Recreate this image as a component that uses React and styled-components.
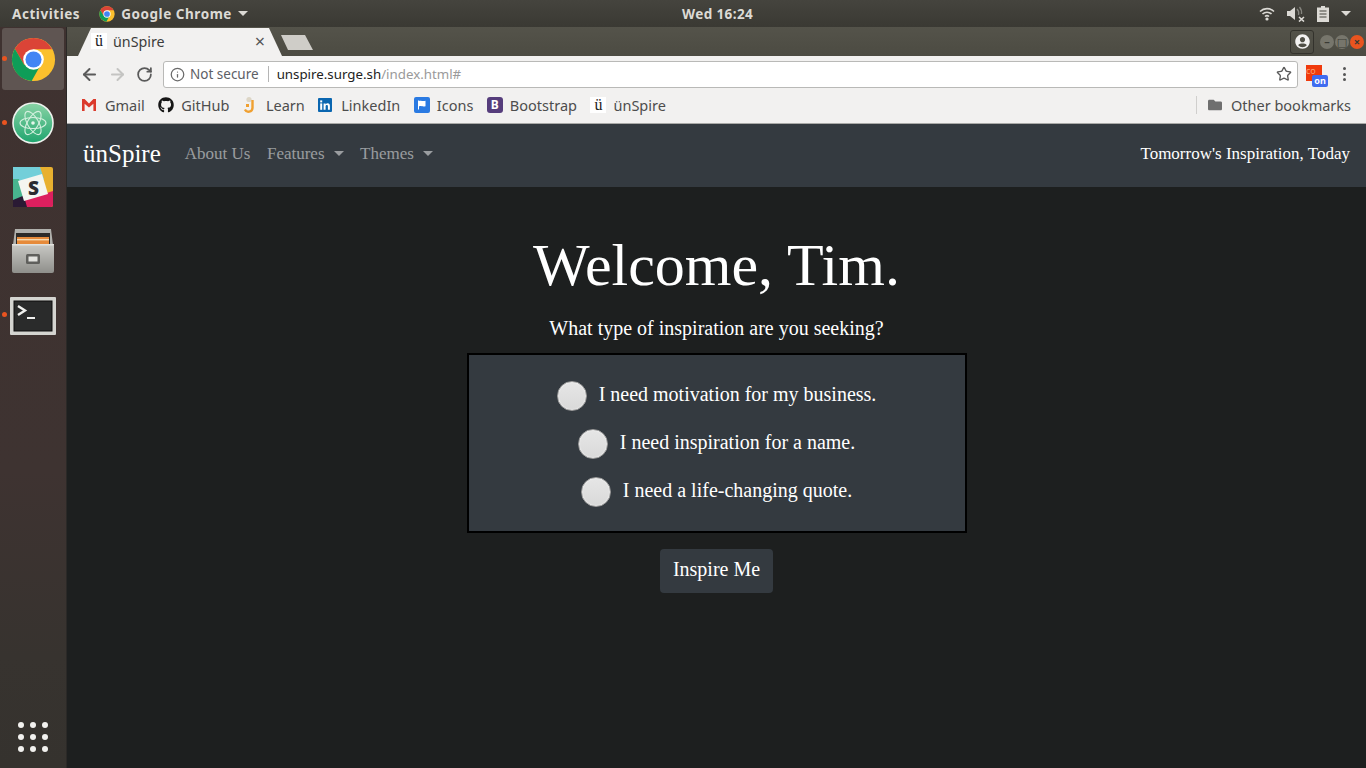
import React from "react";
import styled, { createGlobalStyle } from "styled-components";
import { ArrowLeft, ArrowRight, RotateCw, Star, Info } from "lucide-react";
import { FaGithub, FaFolder, FaUserCircle } from "react-icons/fa";

const UI_FONT = `"Noto Sans", "DejaVu Sans", sans-serif`;
const PAGE_FONT = `"Liberation Serif", "Times New Roman", serif`;

const GlobalStyle = createGlobalStyle`
  html, body {
    margin: 0;
    padding: 0;
    height: 768px;
    overflow: hidden;
    background: #1d1f1f;
  }
  * {
    box-sizing: border-box;
  }
`;

const ChromeLogo = ({ size }) => (
  <svg width={size} height={size} viewBox="0 0 48 48">
    <circle cx="24" cy="24" r="23" fill="#fbc02d" />
    <path d="M24 1a23 23 0 0 0-19.9 11.5L14 29.5 24 13h19.9A23 23 0 0 0 24 1z" fill="#db4437" />
    <path d="M4.1 12.5A23 23 0 0 0 22 46.9L31 31l-17-1.5z" fill="#0f9d58" />
    <circle cx="24" cy="24" r="11" fill="#fff" />
    <circle cx="24" cy="24" r="8.6" fill="#4285f4" />
  </svg>
);

const AtomLogo = () => (
  <svg width="42" height="42" viewBox="0 0 42 42">
    <defs>
      <linearGradient id="atomBg" x1="0" y1="0" x2="0" y2="1">
        <stop offset="0" stopColor="#8ad3a6" />
        <stop offset="1" stopColor="#1fa56e" />
      </linearGradient>
    </defs>
    <circle cx="21" cy="21" r="20" fill="url(#atomBg)" stroke="#eef2ee" strokeWidth="1.6" />
    <g fill="none" stroke="#d5f0df" strokeWidth="1.1">
      <ellipse cx="21" cy="21" rx="13" ry="5.5" />
      <ellipse cx="21" cy="21" rx="13" ry="5.5" transform="rotate(60 21 21)" />
      <ellipse cx="21" cy="21" rx="13" ry="5.5" transform="rotate(120 21 21)" />
    </g>
    <circle cx="21" cy="21" r="1.8" fill="#e6f7ec" />
  </svg>
);

const SlackLogo = () => (
  <svg width="40" height="40" viewBox="0 0 40 40">
    <rect width="40" height="40" rx="2" fill="#e8b02f" />
    <path d="M0 0h27L31 12 3 20 0 16z" fill="#73cfd9" />
    <path d="M0 12l6 0 6 18L0 36z" fill="#48b58f" />
    <path d="M0 40v-7l12-5 3 12z" fill="#2a1a34" />
    <path d="M14 40l-2-7 28-9v14a2 2 0 0 1-2 2z" fill="#dc1f5e" />
    <path d="M5 14L29 7l6 20-24 7z" fill="#f5f5f0" />
    <text x="20.5" y="27.5" textAnchor="middle" fontFamily="Noto Sans" fontWeight="900" fontSize="19" fill="#2b2b30">S</text>
  </svg>
);

const FilesLogo = () => (
  <svg width="42" height="44" viewBox="0 0 42 44">
    <defs>
      <linearGradient id="drawer" x1="0" y1="0" x2="0" y2="1">
        <stop offset="0" stopColor="#c9c9c5" />
        <stop offset="1" stopColor="#8f8f8b" />
      </linearGradient>
    </defs>
    <path d="M3 0h36l2 16H1z" fill="#b0b0ac" />
    <rect x="4" y="4" width="34" height="13" fill="#2c2a28" />
    <rect x="5" y="8" width="32" height="9" fill="#e68a3a" />
    <rect x="5" y="10" width="32" height="1.4" fill="#f5d9b0" />
    <rect x="0" y="15" width="42" height="29" rx="2" fill="url(#drawer)" />
    <rect x="0" y="15" width="42" height="1.5" fill="#e2e2de" />
    <rect x="14" y="25" width="14" height="10" rx="1.5" fill="#5f5f5c" />
    <rect x="16.5" y="27.5" width="9" height="5" fill="#e3e3df" />
  </svg>
);

const TerminalLogo = () => (
  <svg width="46" height="40" viewBox="0 0 46 40">
    <rect y="2" width="46" height="38" rx="1" fill="#d4d4d0" />
    <rect x="4" y="6" width="38" height="30" fill="#2a2b2b" stroke="#0c0c0c" />
    <path d="M8 11l7 4.5-7 4.5" fill="none" stroke="#f0f0ee" strokeWidth="2.4" />
    <rect x="17" y="22" width="8" height="2" fill="#f0f0ee" />
  </svg>
);

const DOCK_ITEMS = [
  { icon: <ChromeLogo size={45} />, running: true, active: true },
  { icon: <AtomLogo />, running: true },
  { icon: <SlackLogo />, running: false },
  { icon: <FilesLogo />, running: false },
  { icon: <TerminalLogo />, running: true },
];

const GmailIcon = () => (
  <svg width="14" height="12" viewBox="0 0 14 12">
    <rect width="14" height="12" fill="#f4f3f1" />
    <path d="M0 0h2.6L7 4.6 11.4 0H14v12h-2.6V4.8L7 8.6 2.6 4.8V12H0z" fill="#db3a2c" />
  </svg>
);

const LearnIcon = () => (
  <svg width="14" height="18" viewBox="0 0 14 18">
    <circle cx="6" cy="3.5" r="2.6" fill="#ddd6c6" />
    <path d="M9.5 4v8a4 4 0 0 1-7.6 1.5" fill="none" stroke="#f0a030" strokeWidth="2.4" />
    <path d="M3 8h3v3H3z" fill="#f0a030" />
  </svg>
);

const LinkedInIcon = () => (
  <svg width="14" height="14" viewBox="0 0 14 14">
    <rect width="14" height="14" rx="1" fill="#0a66b0" />
    <rect x="2.2" y="5.4" width="2" height="6.4" fill="#fff" />
    <rect x="2.2" y="2.4" width="2" height="2" fill="#fff" />
    <path d="M5.6 5.4h2v1c.5-.8 1.2-1.2 2.1-1.2 1.6 0 2.2 1 2.2 2.7v3.9h-2V8.2c0-.8-.3-1.2-.9-1.2-.8 0-1.4.5-1.4 1.4v3.4h-2z" fill="#fff" />
  </svg>
);

const IconsIcon = () => (
  <svg width="16" height="16" viewBox="0 0 16 16">
    <rect width="16" height="16" rx="2" fill="#2a7ae2" />
    <path d="M4 3.5h1v9H4zM5 4c2-1 3 .6 6.5-.2v5.4C8 10 7 8.4 5 9.4z" fill="#fff" />
  </svg>
);

const BootstrapIcon = styled.span`
  width: 16px;
  height: 16px;
  border-radius: 3px;
  background: #563d7c;
  color: #fff;
  font: 700 12px/16px ${UI_FONT};
  text-align: center;
`;

const LetterIcon = styled.span`
  width: 16px;
  height: 16px;
  background: #fff;
  color: #222;
  font: 400 16px/15px ${PAGE_FONT};
  text-align: center;
`;

const BOOKMARKS = [
  { label: "Gmail", icon: <GmailIcon /> },
  { label: "GitHub", icon: <FaGithub size={16} color="#161616" /> },
  { label: "Learn", icon: <LearnIcon /> },
  { label: "LinkedIn", icon: <LinkedInIcon /> },
  { label: "Icons", icon: <IconsIcon /> },
  { label: "Bootstrap", icon: <BootstrapIcon>B</BootstrapIcon> },
  { label: "ünSpire", icon: <LetterIcon>ü</LetterIcon> },
];

const CHOICES = [
  "I need motivation for my business.",
  "I need inspiration for a name.",
  "I need a life-changing quote.",
];

const App = () => {
  return (
    <Screen>
      <GlobalStyle />
      <TopBar>
        <TopLeft>
          <TopLabel>Activities</TopLabel>
          <AppMenu>
            <ChromeLogo size={16} />
            <TopLabel>Google Chrome</TopLabel>
            <TopCaret />
          </AppMenu>
        </TopLeft>
        <Clock>Wed 16:24</Clock>
        <TopRight>
          <svg width="16" height="14" viewBox="0 0 16 14">
            <g fill="none" stroke="#dcdad5" strokeWidth="1.6">
              <path d="M1 4.5a10 10 0 0 1 14 0" />
              <path d="M3.5 7a6.5 6.5 0 0 1 9 0" />
              <path d="M6 9.5a3 3 0 0 1 4 0" />
            </g>
            <circle cx="8" cy="12" r="1.6" fill="#dcdad5" />
          </svg>
          <svg width="18" height="16" viewBox="0 0 18 16">
            <path d="M0 5h3l5-4v13l-5-4H0z" fill="#dcdad5" />
            <path d="M10 3a6 6 0 0 1 1.5 6M12.5 1a9 9 0 0 1 2 7" fill="none" stroke="#85847e" strokeWidth="1.3" />
            <path d="M12 11l5 4.5M17 11l-5 4.5" stroke="#dcdad5" strokeWidth="1.6" />
          </svg>
          <svg width="12" height="16" viewBox="0 0 12 16">
            <path d="M4 0h4v1.5h4V16H0V1.5h4z" fill="#dcdad5" />
            <path d="M2.5 5h7M2.5 8h7M2.5 11h7" stroke="#45443e" strokeWidth="1.2" />
          </svg>
          <TopCaret />
        </TopRight>
      </TopBar>
      <Desktop>
        <Dock>
          <DockList>
            {DOCK_ITEMS.map((item, i) => (
              <DockItem key={i} $active={item.active}>
                {item.running && <RunDot />}
                {item.icon}
              </DockItem>
            ))}
          </DockList>
          <AppGrid>
            {Array.from({ length: 9 }).map((_, i) => (
              <AppDot key={i} />
            ))}
          </AppGrid>
        </Dock>
        <Browser>
          <TabStrip>
            <TabRow>
              <Tab>
                <LetterIcon>ü</LetterIcon>
                <TabTitle>ünSpire</TabTitle>
                <TabClose>×</TabClose>
              </Tab>
              <NewTab />
            </TabRow>
            <WindowControls>
              <ProfileBox>
                <FaUserCircle size={15} color="#f2f1f0" />
              </ProfileBox>
              <WinButton>–</WinButton>
              <WinButton>□</WinButton>
              <WinButton $close>×</WinButton>
            </WindowControls>
          </TabStrip>
          <Toolbar>
            <NavIcons>
              <ArrowLeft size={19} color="#5a5a5a" strokeWidth={2.5} />
              <ArrowRight size={19} color="#c4c4c2" strokeWidth={2.5} />
              <RotateCw size={17} color="#5a5a5a" strokeWidth={2.5} />
            </NavIcons>
            <Omnibox>
              <Info size={15} color="#6a6a6a" />
              <NotSecure>Not secure</NotSecure>
              <OmniDivider />
              <Url>
                unspire.surge.sh<UrlPath>/index.html#</UrlPath>
              </Url>
              <OmniStar>
                <Star size={16} color="#5a5a5a" strokeWidth={2} />
              </OmniStar>
            </Omnibox>
            <Extension>
              co
              <ExtensionBadge>on</ExtensionBadge>
            </Extension>
            <MenuDots>
              <i />
              <i />
              <i />
            </MenuDots>
          </Toolbar>
          <BookmarkBar>
            <BookmarkList>
              {BOOKMARKS.map((b) => (
                <Bookmark key={b.label}>
                  <BookmarkIcon>{b.icon}</BookmarkIcon>
                  {b.label}
                </Bookmark>
              ))}
            </BookmarkList>
            <OtherBookmarks>
              <FaFolder size={14} color="#6f6f6f" />
              Other bookmarks
            </OtherBookmarks>
          </BookmarkBar>
          <Page>
            <Navbar>
              <NavLeft>
                <Brand>ünSpire</Brand>
                <NavLink>About Us</NavLink>
                <NavLink>
                  Features
                  <NavCaret />
                </NavLink>
                <NavLink>
                  Themes
                  <NavCaret />
                </NavLink>
              </NavLeft>
              <Tagline>Tomorrow's Inspiration, Today</Tagline>
            </Navbar>
            <Main>
              <Title>Welcome, Tim.</Title>
              <Lead>What type of inspiration are you seeking?</Lead>
              <ChoiceBox>
                {CHOICES.map((c) => (
                  <Choice key={c}>
                    <Radio type="radio" name="inspiration" />
                    {c}
                  </Choice>
                ))}
              </ChoiceBox>
              <InspireButton>Inspire Me</InspireButton>
            </Main>
          </Page>
        </Browser>
      </Desktop>
    </Screen>
  );
};

export default App;

const Screen = styled.div`
  width: 1366px;
  height: 768px;
  display: flex;
  flex-direction: column;
  overflow: hidden;
`;

const TopBar = styled.header`
  height: 27px;
  flex: none;
  position: relative;
  display: flex;
  align-items: center;
  justify-content: space-between;
  padding: 0 15px 0 12px;
  background: linear-gradient(#45443e, #3a3933);
  color: #dcdad5;
  font: 700 13.5px ${UI_FONT};
`;

const TopLeft = styled.div`
  display: flex;
  align-items: center;
  gap: 19px;
`;

const TopLabel = styled.span`
  letter-spacing: 0.55px;
`;

const AppMenu = styled.div`
  display: flex;
  align-items: center;
  gap: 6px;
`;

const TopCaret = styled.span`
  width: 0;
  height: 0;
  border-left: 5px solid transparent;
  border-right: 5px solid transparent;
  border-top: 5px solid #dcdad5;
`;

const Clock = styled.div`
  position: absolute;
  left: 682px;
  letter-spacing: 0.4px;
`;

const TopRight = styled.div`
  display: flex;
  align-items: center;
  gap: 12px;
`;

const Desktop = styled.div`
  flex: 1;
  display: flex;
  min-height: 0;
`;

const Dock = styled.nav`
  width: 67px;
  flex: none;
  display: flex;
  flex-direction: column;
  justify-content: space-between;
  padding: 1px 0 16px 2px;
  background: linear-gradient(#3f3230 0%, #3e3331 60%, #37332f 85%, #35322e 100%);
  border-right: 1px solid #2b2927;
`;

const DockList = styled.div`
  display: flex;
  flex-direction: column;
  gap: 2px;
`;

const DockItem = styled.div`
  position: relative;
  width: 62px;
  height: 62px;
  display: flex;
  align-items: center;
  justify-content: center;
  border-radius: 3px;
  background: ${(p) => (p.$active ? "#5f5552" : "transparent")};
`;

const RunDot = styled.span`
  position: absolute;
  left: 0;
  top: 28px;
  width: 5px;
  height: 5px;
  border-radius: 50%;
  background: #e95420;
`;

const AppGrid = styled.div`
  display: grid;
  grid-template-columns: repeat(3, 6px);
  gap: 6px;
  justify-content: center;
  padding-right: 2px;
`;

const AppDot = styled.span`
  width: 6px;
  height: 6px;
  border-radius: 50%;
  background: #f2f1ef;
`;

const Browser = styled.div`
  flex: 1;
  min-width: 0;
  display: flex;
  flex-direction: column;
`;

const TabStrip = styled.div`
  height: 29px;
  flex: none;
  display: flex;
  justify-content: space-between;
  padding: 1px 2px 0 11px;
  background: linear-gradient(#54534a, #4c4b42);
`;

const TabRow = styled.div`
  display: flex;
  align-items: flex-start;
`;

const Tab = styled.div`
  width: 204px;
  height: 28px;
  display: flex;
  align-items: center;
  padding: 0 17px 2px 13px;
  gap: 5px;
  background: #f2f1f0;
  clip-path: polygon(0 100%, 13px 0, 191px 0, 100% 100%);
  color: #3c3c3c;
  font: 400 14.3px ${UI_FONT};
`;

const TabTitle = styled.span`
  flex: 1;
  margin-left: 1px;
`;

const TabClose = styled.span`
  font: 400 18px/1 ${UI_FONT};
  color: #555;
`;

const NewTab = styled.div`
  width: 32px;
  height: 15px;
  margin: 7px 0 0 -1px;
  background: #cfcdc8;
  clip-path: polygon(0 0, 24px 0, 100% 100%, 7px 100%);
`;

const WindowControls = styled.div`
  display: flex;
  align-items: center;
  gap: 1px;
  padding-bottom: 1px;
`;

const ProfileBox = styled.div`
  width: 24px;
  height: 24px;
  margin-right: 5px;
  display: flex;
  align-items: center;
  justify-content: center;
  border: 1px solid #33322c;
  border-radius: 3px;
`;

const WinButton = styled.span`
  width: 14px;
  height: 14px;
  border-radius: 50%;
  background: ${(p) => (p.$close ? "#e9541f" : "#77766c")};
  color: #3a3a34;
  font: 700 11px/13px ${UI_FONT};
  text-align: center;
`;

const Toolbar = styled.div`
  height: 36px;
  flex: none;
  display: flex;
  align-items: center;
  padding: 0 12px 0 13px;
  background: #f2f1f0;
`;

const NavIcons = styled.div`
  width: 83px;
  display: flex;
  align-items: center;
  gap: 9px;
`;

const Omnibox = styled.div`
  width: 1135px;
  height: 27px;
  display: flex;
  align-items: center;
  padding: 0 5px 0 6px;
  background: #fff;
  border: 1px solid #b9b9b7;
  border-radius: 3px;
  font: 400 13.5px ${UI_FONT};
`;

const NotSecure = styled.span`
  margin-left: 5px;
  color: #5d6066;
`;

const OmniDivider = styled.span`
  width: 1px;
  height: 16px;
  margin: 0 8px 0 9px;
  background: #b5b5b5;
`;

const Url = styled.span`
  flex: 1;
  color: #222;
  font-size: 13.3px;
`;

const UrlPath = styled.span`
  color: #9a9a9a;
`;

const OmniStar = styled.span`
  display: flex;
`;

const Extension = styled.div`
  position: relative;
  width: 16px;
  height: 16px;
  margin: -3px 0 0 8px;
  background: #f03a0c;
  color: #f9a070;
  font: 400 9px/11px ${UI_FONT};
`;

const ExtensionBadge = styled.span`
  position: absolute;
  left: 6px;
  top: 10px;
  width: 16px;
  height: 12px;
  border-radius: 2px;
  background: #3f6cf0;
  color: #fff;
  font: 700 9px/12px ${UI_FONT};
  text-align: center;
`;

const MenuDots = styled.div`
  margin-left: 21px;
  display: flex;
  flex-direction: column;
  gap: 2.5px;

  i {
    width: 3px;
    height: 3px;
    border-radius: 50%;
    background: #555;
  }
`;

const BookmarkBar = styled.div`
  height: 32px;
  flex: none;
  display: flex;
  align-items: center;
  justify-content: space-between;
  padding: 0 15px 5px 15px;
  background: #f2f1f0;
  border-bottom: 1px solid #a9a9a7;
  color: #4d4d4d;
  font: 400 14.5px ${UI_FONT};
`;

const BookmarkList = styled.div`
  display: flex;
  align-items: center;
  gap: 13.5px;
`;

const Bookmark = styled.span`
  display: flex;
  align-items: center;
  gap: 7px;
`;

const BookmarkIcon = styled.span`
  width: 16px;
  display: flex;
  align-items: center;
  justify-content: flex-start;
`;

const OtherBookmarks = styled.span`
  display: flex;
  align-items: center;
  gap: 9px;
  height: 18px;
  padding-left: 11px;
  border-left: 1px solid #d0cfcd;
`;

const Page = styled.div`
  flex: 1;
  min-height: 0;
  display: flex;
  flex-direction: column;
  background: #1d1f1f;
  font-family: ${PAGE_FONT};
  color: #fff;
`;

const Navbar = styled.div`
  height: 63px;
  flex: none;
  display: flex;
  align-items: center;
  justify-content: space-between;
  padding: 0 16px 4px;
  background: #343a40;
`;

const NavLeft = styled.div`
  display: flex;
  align-items: center;
`;

const Brand = styled.span`
  font-size: 25px;
  margin-right: 15.75px;
`;

const NavLink = styled.span`
  display: flex;
  align-items: center;
  padding: 0 8.25px;
  font-size: 17px;
  color: rgba(255, 255, 255, 0.5);
`;

const NavCaret = styled.span`
  width: 0;
  height: 0;
  margin-left: 9px;
  border-left: 5px solid transparent;
  border-right: 5px solid transparent;
  border-top: 5px solid rgba(255, 255, 255, 0.5);
`;

const Tagline = styled.span`
  font-size: 17px;
`;

const Main = styled.main`
  display: flex;
  flex-direction: column;
  align-items: center;
  padding-top: 39px;
`;

const Title = styled.h1`
  margin: 0;
  font-size: 60px;
  font-weight: 400;
  line-height: 78px;
`;

const Lead = styled.p`
  margin: 9px 0 10px;
  font-size: 20px;
  line-height: 30px;
`;

const ChoiceBox = styled.div`
  width: 500px;
  height: 180px;
  display: flex;
  flex-direction: column;
  align-items: center;
  padding-top: 15px;
  background: #343a40;
  border: 2px solid #000;
`;

const Choice = styled.label`
  height: 48px;
  display: flex;
  align-items: center;
  gap: 12px;
  font-size: 20px;
`;

const Radio = styled.input`
  appearance: none;
  width: 30px;
  height: 30px;
  margin: 4px 0 0;
  border-radius: 50%;
  border: 1px solid #9d9d9d;
  background: linear-gradient(#e6e6e6, #d9d9d9);
  box-shadow: inset 0 0 2px #fff;
`;

const InspireButton = styled.button`
  height: 44px;
  margin-top: 16px;
  padding: 0 13px 4px;
  border: none;
  border-radius: 4px;
  background: #343a40;
  color: #fff;
  font-family: ${PAGE_FONT};
  font-size: 20px;
`;
